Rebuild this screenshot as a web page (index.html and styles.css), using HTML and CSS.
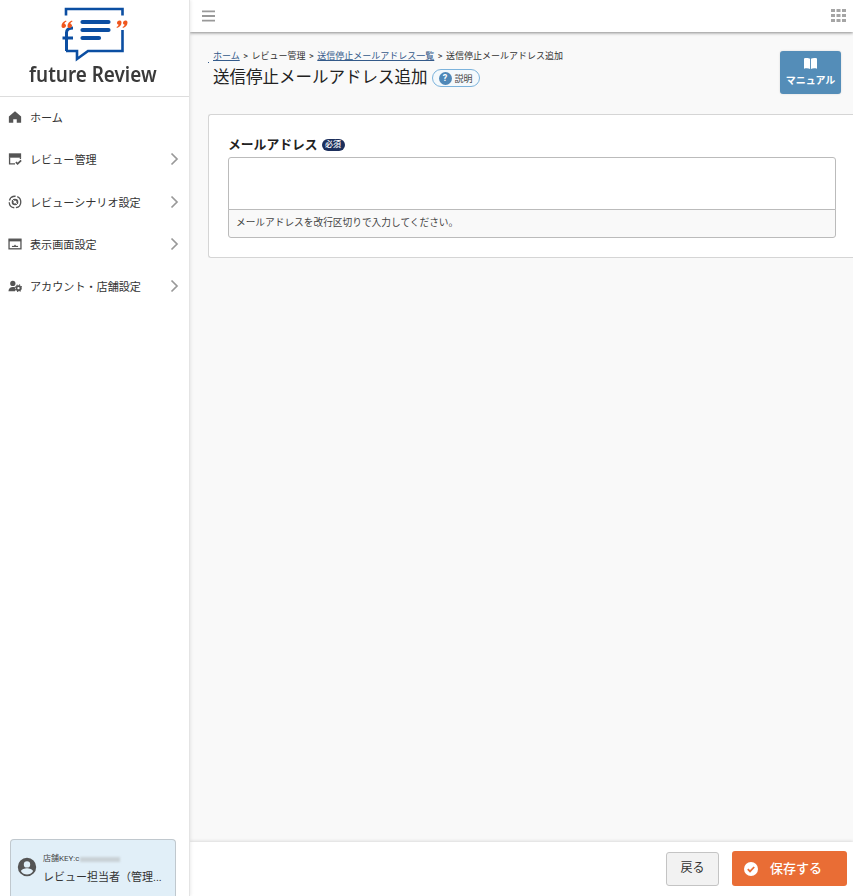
FILE: index.html
```html
<!DOCTYPE html>
<html lang="ja">
<head>
<meta charset="utf-8">
<title>送信停止メールアドレス追加</title>
<link rel="stylesheet" href="styles.css">
</head>
<body>
<div class="app">
  <aside class="sidebar">
    <div class="logo">
      <svg class="logo-mark" width="70" height="56" viewBox="59 7 70 56">
        <path d="M65 15.500V9H121.500V15.500M121.500 30V51H87L76 59V51H65" fill="none" stroke="#0b4ea2" stroke-width="2.600"/>
        <path d="M65.500 51V32.500C65.500 29.500 67.500 28 72 28M61.500 38H72" fill="none" stroke="#0b4ea2" stroke-width="3"/>
        <path d="M81.500 22H107.500M81.500 30H107.500M81.500 38H98" stroke="#0b4ea2" stroke-width="4.200" stroke-linecap="round"/>
        <path d="M65 20.500C62 21.500 60.500 23.500 60.500 26C60.500 27.500 61.500 28 62.500 28C64 28 65 27 65 25.500C65 24.500 64 24 63.500 24C63.500 23 64 22 65.500 21.500ZM71 20.500C68 21.500 66.500 23.500 66.500 26C66.500 27.500 67.500 28 68.500 28C70 28 71 27 71 25.500C71 24.500 70 24 69.500 24C69.500 23 70 22 71.500 21.500Z" fill="#f0561d"/>
        <path d="M122 28C125 27 126.500 25 126.500 22.500C126.500 21 125.500 20.500 124.500 20.500C123 20.500 122 21.500 122 23C122 24 123 24.500 123.500 24.500C123.500 25.500 123 26.500 121.500 27ZM116 28C119 27 120.500 25 120.500 22.500C120.500 21 119.500 20.500 118.500 20.500C117 20.500 116 21.500 116 23C116 24 117 24.500 117.500 24.500C117.500 25.500 117 26.500 115.500 27Z" fill="#f0561d"/>
      </svg>
      <div class="logo-text">future Review</div>
    </div>
    <nav class="menu">
      <a class="menu-item">
        <svg class="menu-icon" viewBox="0 0 16 16"><path d="M8 1.500 1 7.500V14.500H6V10.500H10V14.500H15V7.500Z" fill="#555"/></svg>
        <span class="menu-label">ホーム</span>
      </a>
      <a class="menu-item">
        <svg class="menu-icon" viewBox="0 0 16 16"><path d="M1 1.500H15V6.500H1Z" fill="#555"/><path d="M1.800 6V13.500H8M14.200 6V8" fill="none" stroke="#555" stroke-width="1.500"/><path d="M9 11.500 11 13.500 15 9.500" fill="none" stroke="#555" stroke-width="2"/></svg>
        <span class="menu-label">レビュー管理</span>
        <svg class="chevron" viewBox="0 0 10 14"><path d="M1.500 1.500 7 7 1.500 12.500" fill="none" stroke="#999" stroke-width="1.700"/></svg>
      </a>
      <a class="menu-item">
        <svg class="menu-icon" viewBox="0 0 16 16"><circle cx="8" cy="8" r="6.600" fill="none" stroke="#555" stroke-width="1.500" stroke-dasharray="9 2"/><circle cx="8" cy="8" r="2.800" fill="none" stroke="#555" stroke-width="2"/><path d="M3.500 3.500 12.500 12.500" stroke="#fff" stroke-width="1"/></svg>
        <span class="menu-label">レビューシナリオ設定</span>
        <svg class="chevron" viewBox="0 0 10 14"><path d="M1.500 1.500 7 7 1.500 12.500" fill="none" stroke="#999" stroke-width="1.700"/></svg>
      </a>
      <a class="menu-item">
        <svg class="menu-icon" viewBox="0 0 16 16"><rect x="1.200" y="2.500" width="13.600" height="11" fill="none" stroke="#555" stroke-width="1.500"/><path d="M1 2.500H15V5H1Z" fill="#555"/><path d="M4.500 10.800H11.500" stroke="#555" stroke-width="1.300"/><path d="M8 8.500 9.500 10.500H6.500Z" fill="#555"/></svg>
        <span class="menu-label">表示画面設定</span>
        <svg class="chevron" viewBox="0 0 10 14"><path d="M1.500 1.500 7 7 1.500 12.500" fill="none" stroke="#999" stroke-width="1.700"/></svg>
      </a>
      <a class="menu-item">
        <svg class="menu-icon" viewBox="0 0 16 16"><circle cx="5.500" cy="5" r="3" fill="#555"/><path d="M0.500 14C0.500 10.500 3 9 5.500 9S8 9.500 8 9.500V14Z" fill="#555"/><circle cx="12" cy="10.500" r="2.300" fill="none" stroke="#555" stroke-width="2"/><circle cx="12" cy="10.500" r="3.800" fill="none" stroke="#555" stroke-width="1.200" stroke-dasharray="1.500 1.500"/></svg>
        <span class="menu-label">アカウント・店舗設定</span>
        <svg class="chevron" viewBox="0 0 10 14"><path d="M1.500 1.500 7 7 1.500 12.500" fill="none" stroke="#999" stroke-width="1.700"/></svg>
      </a>
    </nav>
    <div class="user-card">
      <svg class="user-icon" viewBox="0 0 20 20"><path d="M10 .8a9.200 9.200 0 1 0 0 18.400A9.200 9.200 0 0 0 10 .8Zm0 3.400a3.200 3.200 0 1 1 0 6.400 3.200 3.200 0 0 1 0-6.400Zm0 13.200a7.300 7.300 0 0 1-6-3.200c0-2 4-3 6-3s6 1 6 3a7.300 7.300 0 0 1-6 3.200Z" fill="#555"/></svg>
      <div class="user-info">
        <div class="store-key">店舗KEY:c<span class="blur-key"></span></div>
        <div class="user-name">レビュー担当者（管理...</div>
      </div>
    </div>
  </aside>
  <div class="main">
    <header class="topbar">
      <svg class="hamburger" viewBox="0 0 14 12"><path d="M0 1H14M0 6H14M0 11H14" stroke="#999" stroke-width="2"/></svg>
      <svg class="grid-icon" viewBox="0 0 15 13"><path d="M0 0h4v3H0zM5.500 0h4v3h-4zM11 0h4v3h-4zM0 5h4v3H0zM5.500 5h4v3h-4zM11 5h4v3h-4zM0 10h4v3H0zM5.500 10h4v3h-4zM11 10h4v3h-4z" fill="#a5a5a5"/></svg>
    </header>
    <div class="content">
      <div class="page-head">
        <div class="page-titles">
          <div class="breadcrumb"><a class="crumb-link">ホーム</a> &gt; レビュー管理 &gt; <a class="crumb-link">送信停止メールアドレス一覧</a> &gt; 送信停止メールアドレス追加</div>
          <div class="title-row">
            <h1 class="page-title">送信停止メールアドレス追加</h1>
            <span class="help-pill"><span class="help-q">?</span>説明</span>
          </div>
        </div>
        <a class="manual-btn">
          <svg class="book" viewBox="0 0 16 14"><path d="M1 1.500C3 .8 6 .8 7.500 2V13C6 12 3 12 1 12.700ZM15 1.500C13 .8 10 .8 8.500 2V13C10 12 13 12 15 12.700Z" fill="#fff"/></svg>
          <span>マニュアル</span>
        </a>
      </div>
      <section class="card">
        <label class="field-label">メールアドレス<span class="required">必須</span></label>
        <div class="input-group">
          <div class="textarea"></div>
          <div class="hint">メールアドレスを改行区切りで入力してください。</div>
        </div>
      </section>
    </div>
    <footer class="footer">
      <a class="back-btn">戻る</a>
      <a class="save-btn">
        <svg class="save-icon" viewBox="0 0 14 14"><circle cx="7" cy="7" r="7" fill="#fff"/><path d="M3.800 7.200 6 9.400 10.200 5" fill="none" stroke="#e96d35" stroke-width="1.800"/></svg>
        <span>保存する</span>
      </a>
    </footer>
  </div>
</div>
</body>
</html>
```
FILE: styles.css
```css
* { box-sizing: border-box; }
html, body { margin: 0; padding: 0; }
body {
  font-family: Roboto, "Noto Sans CJK JP", sans-serif;
  color: #333;
  background: #fff;
}
.app { display: flex; width: 853px; height: 896px; overflow: hidden; }

.sidebar {
  width: 190px;
  flex: none;
  display: flex;
  flex-direction: column;
  background: #fff;
  border-right: 1px solid #e4e4e4;
  box-shadow: 1px 0 3px rgba(0,0,0,.08);
  position: relative;
  z-index: 2;
}
.logo {
  height: 97px;
  flex: none;
  border-bottom: 1px solid #ddd;
  display: flex;
  flex-direction: column;
  align-items: center;
  padding-top: 7px;
}
.logo-mark { display: block; }
.logo-text {
  font-family: "Noto Sans", sans-serif;
  font-weight: 600;
  font-size: 21px;
  line-height: 20px;
  color: #3a3a3a;
  margin: 1px 4px 0 0;
  transform: scaleX(.9);
  white-space: nowrap;
}
.menu { display: flex; flex-direction: column; margin-top: -1px; }
.menu-item {
  display: flex;
  align-items: center;
  height: 42.300px;
  padding: 0 9px 0 8px;
  font-size: 11.100px;
  color: #333;
}
.menu-icon { width: 14px; height: 14px; flex: none; margin-right: 8px; }
.menu-label { flex: 1; white-space: nowrap; }
.chevron { width: 10px; height: 14px; flex: none; }

.user-card {
  margin: auto 13px 0 10px;
  height: 57px;
  background: #e1eff8;
  border: 1px solid #c0c8ce;
  border-bottom: none;
  border-radius: 4px 4px 0 0;
  display: flex;
  align-items: flex-start;
  padding: 17px 0 0 6px;
  gap: 6px;
}
.user-icon { width: 20px; height: 20px; flex: none; }
.user-info { display: flex; flex-direction: column; margin-top: -4px; min-width: 0; }
.store-key { font-size: 8px; line-height: 12px; color: #444; display: flex; align-items: center; }
.blur-key { display: inline-block; width: 40px; height: 5px; background: #c9d1d6; filter: blur(1px); }
.user-name { font-size: 11px; line-height: 18px; margin-top: 4px; color: #333; white-space: nowrap; }

.main { flex: 1; min-width: 0; display: flex; flex-direction: column; background: #f9f9f9; }
.topbar {
  height: 32px;
  flex: none;
  background: #fff;
  display: flex;
  align-items: center;
  justify-content: space-between;
  padding: 0 7px 0 12px;
  box-shadow: 0 1px 3px rgba(0,0,0,.45);
  position: relative;
}
.hamburger { width: 13px; height: 12px; margin-top: -1px; }
.grid-icon { width: 15px; height: 13px; margin-top: -1px; }

.content { flex: 1; min-height: 0; padding: 16px 0 0 18px; }
.page-head { display: flex; justify-content: space-between; align-items: flex-start; padding-right: 12px; height: 66px; }
.page-titles { padding: 2px 0 0 5px; position: relative; }
.page-titles::before {
  content: "";
  position: absolute;
  left: 0;
  top: 14px;
  width: 1px;
  height: 1px;
  background: #345a8a;
}
.breadcrumb { font-size: 9px; word-spacing: 1.300px; line-height: 12px; color: #333; white-space: nowrap; }
.crumb-link { color: #345a8a; text-decoration: underline; }
.title-row { display: flex; align-items: center; margin-top: 5px; }
.page-title { margin: 0; font-size: 16.500px; line-height: 22px; font-weight: 400; color: #222; }
.help-pill {
  display: flex;
  align-items: center;
  gap: 3px;
  height: 18px;
  margin-left: 4px;
  padding: 0 6px;
  border: 1px solid #7cb3dc;
  border-radius: 9px;
  background: #f4f9fc;
  font-size: 9px;
  color: #444;
}
.help-q {
  width: 13px;
  height: 13px;
  border-radius: 50%;
  background: #4f88b8;
  color: #fff;
  font-size: 9px;
  font-weight: 700;
  line-height: 13px;
  text-align: center;
}
.manual-btn {
  width: 61px;
  height: 43px;
  margin-top: 3px;
  background: #548db8;
  border-radius: 3px;
  color: #fff;
  font-size: 10px;
  font-weight: 700;
  display: flex;
  flex-direction: column;
  align-items: center;
  padding-top: 6px;
  line-height: 14px;
  box-shadow: 0 0 2px rgba(0,0,0,.15);
}
.book { width: 15px; height: 13px; margin-bottom: 4px; }

.card {
  height: 144px;
  background: #fff;
  border: 1px solid #d5d5d5;
  border-right: none;
  border-radius: 3px 0 0 3px;
  padding: 22px 17px 0 19px;
}
.field-label { display: flex; align-items: center; font-size: 12.800px; font-weight: 700; line-height: 16px; color: #222; }
.required {
  margin-left: 4px;
  width: 23px;
  height: 12px;
  border-radius: 6px;
  background: #1c2f5c;
  color: #fff;
  font-size: 8px;
  line-height: 12px;
  font-weight: 500;
  text-align: center;
}
.input-group { margin-top: 4px; }
.textarea { height: 53px; border: 1px solid #bbb; border-radius: 3px 3px 0 0; background: #fff; }
.hint {
  height: 29px;
  margin-top: -1px;
  border: 1px solid #bbb;
  border-radius: 0 0 3px 3px;
  background: #f9f9f9;
  padding: 0 7px;
  font-size: 9.700px;
  line-height: 26px;
  color: #444;
}

.footer {
  height: 54px;
  flex: none;
  background: #fff;
  box-shadow: 0 -1px 3px rgba(0,0,0,.12);
  display: flex;
  justify-content: flex-end;
  align-items: flex-start;
  gap: 13px;
  padding: 9px 6px 0 0;
  position: relative;
}
.back-btn {
  width: 53px;
  height: 34px;
  margin-top: 1px;
  background: #f2f2f2;
  border: 1px solid #c4c4c4;
  border-radius: 3px;
  font-size: 12px;
  line-height: 30px;
  text-align: center;
  color: #333;
}
.save-btn {
  width: 115px;
  height: 35px;
  background: #e96d35;
  border-radius: 3px;
  color: #fff;
  font-size: 13px;
  font-weight: 500;
  display: flex;
  align-items: center;
  padding-left: 12px;
  gap: 12px;
}
.save-btn span { margin-top: -3px; }
.save-icon { width: 14px; height: 14px; flex: none; }
```
